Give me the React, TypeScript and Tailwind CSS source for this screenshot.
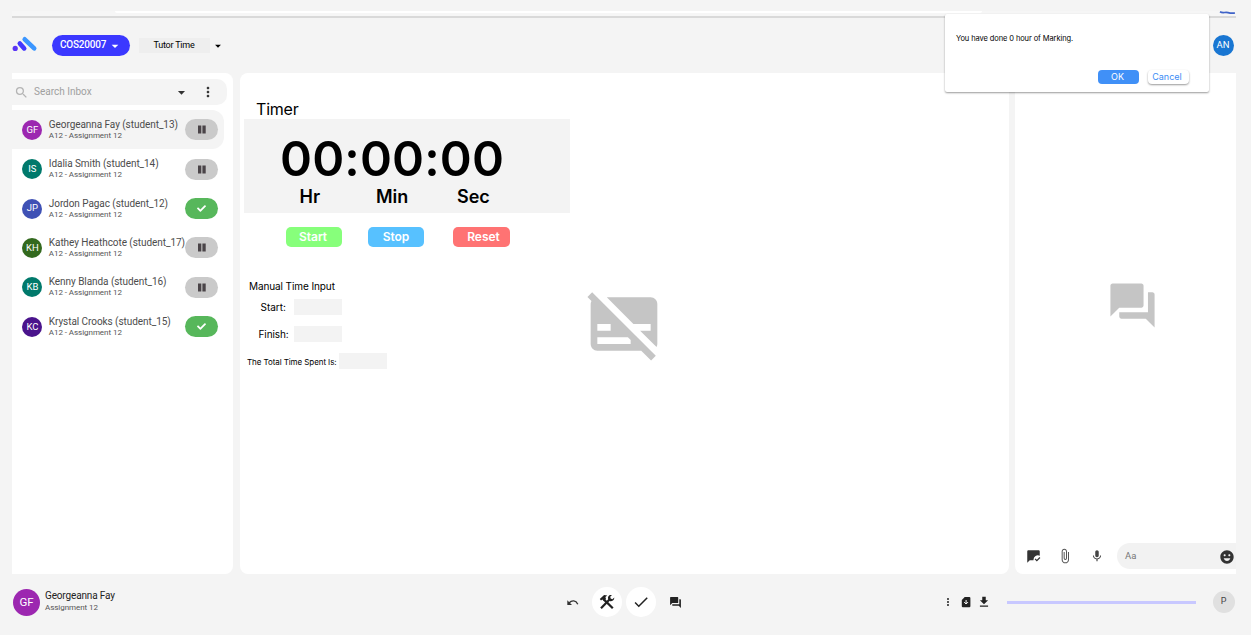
import React from "react";
import {
  MdSubtitlesOff,
  MdForum,
  MdArrowDropDown,
  MdMoreVert,
  MdSearch,
  MdCheck,
  MdMic,
  MdAttachFile,
  MdEmojiEmotions,
  MdDownload,
  MdMarkChatRead,
} from "react-icons/md";
import { FaCheck } from "react-icons/fa";

type Student = { initials: string; name: string; color: string; done: boolean };

const students: Student[] = [
  { initials: "GF", name: "Georgeanna Fay (student_13)", color: "bg-[#9c27b0]", done: false },
  { initials: "IS", name: "Idalia Smith (student_14)", color: "bg-[#00796b]", done: false },
  { initials: "JP", name: "Jordon Pagac (student_12)", color: "bg-[#3f51b5]", done: true },
  { initials: "KH", name: "Kathey Heathcote (student_17)", color: "bg-[#33691e]", done: false },
  { initials: "KB", name: "Kenny Blanda (student_16)", color: "bg-[#00796b]", done: false },
  { initials: "KC", name: "Krystal Crooks (student_15)", color: "bg-[#4a148c]", done: true },
];

function Logo() {
  return (
    <svg width="26" height="16" viewBox="0 0 26 16" fill="none" strokeLinecap="round" strokeWidth="4.6">
      <circle cx="3.2" cy="12.4" r="2.6" fill="#5a35f5" />
      <path d="M7.8 7.4L12.2 12.4" stroke="#4338ff" />
      <path d="M12.7 3.3L22.2 12.4" stroke="#3b96ff" />
    </svg>
  );
}

function PauseIcon() {
  return (
    <svg width="10" height="9" viewBox="0 0 10 9" fill="#4a4448">
      <rect x="1" y="0.5" width="3.3" height="8" />
      <rect x="5.4" y="0.5" width="3.3" height="8" />
    </svg>
  );
}

function StudentRow({ student, selected }: { student: Student; selected: boolean }) {
  return (
    <div className={`flex h-[39.4px] w-[212px] items-center rounded-r-[12px] pl-[10.4px] ${selected ? "bg-[#f4f4f4]" : ""}`}>
      <div className={`flex size-5 shrink-0 items-center justify-center rounded-full text-[9.5px] text-white ${student.color}`}>
        {student.initials}
      </div>
      <div className="ml-[6.4px] w-[136.6px] shrink-0 whitespace-nowrap">
        <div className="text-[10px] leading-[12px] tracking-[-0.06px] text-[#4c4c4c]">{student.name}</div>
        <div className="text-[8px] leading-[10px] tracking-[-0.05px] text-[#555]">A12 - Assignment 12</div>
      </div>
      <div className={`flex h-[21px] w-[33px] shrink-0 items-center justify-center rounded-full ${student.done ? "bg-[#57b75b]" : "bg-[#cacaca]"}`}>
        {student.done ? <FaCheck size={9} color="#fff" /> : <PauseIcon />}
      </div>
    </div>
  );
}

function Inbox() {
  return (
    <section className="flex w-[221px] flex-col rounded-r-[8px] bg-white pt-[6px]">
      <div className="flex h-[26px] w-[215px] items-center rounded-r-[10px] bg-[#f4f4f4] pl-[2px]">
        <MdSearch size={15} color="#b4b4b4" />
        <span className="ml-[5px] w-[127px] pb-[1px] text-[10px] text-[#a0a0a0]">Search Inbox</span>
        <MdArrowDropDown className="ml-[12px]" size={17} color="#333" />
        <MdMoreVert className="ml-[10px]" size={16} color="#333" />
      </div>
      <div className="flex flex-col pt-[5.1px]">
        {students.map((s, i) => (
          <StudentRow key={s.initials} student={s} selected={i === 0} />
        ))}
      </div>
    </section>
  );
}

function TimerPanel() {
  return (
    <section className="ml-[7px] flex w-[769px] rounded-[8px] bg-white pl-1 text-black">
      <div className="flex w-[327px] flex-col pt-[26px] whitespace-nowrap">
        <h1 className="h-5 pl-[12px] text-[16px] leading-5 tracking-[-0.2px]">Timer</h1>
        <div className="h-[94px] w-[326px] bg-[#f3f3f3]">
          <div className="h-[66px] pt-[14px] pl-[36px] text-[48.5px] leading-[52px] font-semibold tracking-[0.15px]">00:00:00</div>
          <div className="flex text-[18px] leading-6 font-semibold">
            <span className="ml-[55.5px] w-[76.5px]">Hr</span>
            <span className="w-[81px]">Min</span>
            <span>Sec</span>
          </div>
        </div>
        <div className="flex pt-[14px] pl-[42px] text-[12px] leading-5 font-semibold text-white">
          <button className="mr-[26px] h-5 w-[56px] rounded-[5px] bg-[#87ff7b] pr-[2px]">Start</button>
          <button className="mr-[29px] h-5 w-[56px] rounded-[5px] bg-[#57c1ff]">Stop</button>
          <button className="h-5 w-[57px] rounded-[5px] bg-[#ff7373] pl-1">Reset</button>
        </div>
        <h2 className="mt-[30px] pl-[5px] text-[10px] leading-[18px] tracking-[-0.1px]">Manual Time Input</h2>
        <label className="mt-[4px] flex h-4 items-center text-[10px]">
          <span className="w-[50px] pt-[1px] pl-[16.5px]">Start:</span>
          <span className="h-4 w-[48px] bg-[#f3f3f3]" />
        </label>
        <label className="mt-[11px] flex h-4 items-center text-[10px]">
          <span className="w-[50px] pl-[14.5px] tracking-[-0.1px]">Finish:</span>
          <span className="h-4 w-[48px] bg-[#f3f3f3]" />
        </label>
        <label className="mt-[11px] flex h-4 items-center text-[8px]">
          <span className="w-[95px] pt-[1px] pl-[3px] tracking-[-0.08px]">The Total Time Spent Is:</span>
          <span className="h-4 w-[48px] bg-[#f3f3f3]" />
        </label>
      </div>
      <MdSubtitlesOff className="mt-[210.5px] ml-[12.7px]" size={80} color="#c5c5c5" />
    </section>
  );
}

function ChatPanel() {
  return (
    <section className="ml-[6px] flex w-[221px] flex-col rounded-l-[8px] bg-white">
      <div className="flex h-[470px] pt-[206px] pl-[91.2px]">
        <MdForum size={53} color="#c5c5c5" />
      </div>
      <div className="flex h-[26px] items-center pl-[11.4px]">
        <MdMarkChatRead size={15} color="#333" />
        <MdAttachFile className="ml-[16px]" size={16} color="#555" />
        <MdMic className="ml-[16.6px]" size={14} color="#444" />
        <div className="ml-[13px] flex h-[26px] flex-1 items-center justify-between rounded-l-full rounded-r-[7px] bg-[#f2f2f2] pl-2">
          <span className="text-[9.5px] text-[#777]">Aa</span>
          <MdEmojiEmotions className="mt-[1px] mr-[1.3px]" size={16} color="#333" />
        </div>
      </div>
    </section>
  );
}

function ToolsIcon() {
  return (
    <svg width="16" height="16" viewBox="0 0 16 16" fill="none" stroke="#222">
      <path d="M5 5.6L13.8 14.3" strokeWidth="2.2" />
      <path d="M2 14.2L10.5 5.5" strokeWidth="2.2" />
      <path d="M.8 5L5.1 1.1L8.2 1.5L6.4 3.1L7 5L4.7 7L3.3 5.5L2 6.5Z" fill="#222" stroke="none" />
      <path d="M10.8 1.1A3.5 3.5 0 0 0 9.4 5.6L10.7 7A3.5 3.5 0 0 0 15.3 3.4L13.4 5.2L11.7 4.5L11.2 2.8L13 .9Z" fill="#222" stroke="none" />
    </svg>
  );
}

function UndoIcon() {
  return (
    <svg width="13" height="9" viewBox="0 0 13 9" fill="none" stroke="#333">
      <path d="M2 5C4.9 1.9 8.8 2.1 10.8 6.2" strokeWidth="1.4" />
      <path d="M0.3 2.3V6.9H5Z" fill="#333" stroke="none" />
    </svg>
  );
}

function FileDownIcon() {
  return (
    <svg width="10" height="12" viewBox="0 0 10 12">
      <path d="M3.7 1H8.4Q9.4 1 9.4 2V10.2Q9.4 11.2 8.4 11.2H1.8Q.8 11.2 .8 10.2V4Z" fill="#222" />
      <path d="M5.1 4V7.8M3.2 6.1L5.1 8L7 6.1" fill="none" stroke="#fff" />
    </svg>
  );
}

function Footer() {
  return (
    <footer className="flex h-[61px] items-center pb-[4.5px] pl-[13px]">
      <div className="flex size-[27px] items-center justify-center rounded-full bg-[#9c27b0] text-[11.5px] text-white">GF</div>
      <div className="ml-[5px] w-[522px] pb-[1px] whitespace-nowrap">
        <div className="text-[10px] leading-[12px] tracking-[-0.15px] text-[#222]">Georgeanna Fay</div>
        <div className="text-[8px] leading-[12px] tracking-[-0.05px] text-[#555]">Assignment 12</div>
      </div>
      <UndoIcon />
      <div className="ml-[12px] flex size-[30px] items-center justify-center rounded-full bg-white"><ToolsIcon /></div>
      <div className="ml-[4px] flex size-[30px] items-center justify-center rounded-full bg-white"><MdCheck size={18} color="#222" /></div>
      <MdForum className="ml-[12.5px]" size={13} color="#222" />
      <MdMoreVert className="ml-[260.5px]" size={12} color="#333" />
      <span className="ml-[7px]"><FileDownIcon /></span>
      <MdDownload className="ml-[6px]" size={14} color="#222" />
      <div className="ml-[16px] h-[3px] w-[189px] bg-[#c8c8ff]" />
      <div className="ml-[16.5px] flex size-[22px] items-center justify-center rounded-full bg-[#e0e0e0] pb-[1px] text-[9px] text-[#444]">P</div>
    </footer>
  );
}

export default function App() {
  return (
    <div className="relative flex h-[635px] w-[1251px] flex-col overflow-hidden bg-[#f4f4f4] font-['Roboto',sans-serif]">
      <div className="mt-[11px] ml-[12px] flex h-[7px] w-[1224px] border-b-2 border-[#d9d9d9] bg-[#f6f6f6]">
        <div className="ml-[103px] h-[2px] w-[867px] rounded-b-full bg-white" />
        <svg className="ml-auto" width="17" height="5" viewBox="0 0 17 5" fill="none">
          <path d="M1 .8C4 2.6 6 .8 9 1.6S13 2.4 16 2" stroke="#3f63c8" strokeWidth="1.7" />
        </svg>
      </div>
      <header className="flex h-[55px] items-center pl-[12px]">
        <span className="mb-[4px]"><Logo /></span>
        <button className="ml-[14px] flex h-[21px] w-[78px] items-center rounded-full bg-[#3b38ff] pl-2 text-[10px] text-white">
          <span className="w-[46.5px] pb-[2px] text-left font-medium tracking-[-0.2px]">COS20007</span>
          <MdArrowDropDown size={16} />
        </button>
        <div className="ml-[9px] flex h-[15px] w-[71px] items-center justify-center bg-[#eee] pt-[1px] pr-[1px] text-[9px] tracking-[-0.2px] text-black">
          Tutor Time
        </div>
        <MdArrowDropDown className="mt-[1px] ml-[0.5px]" size={14} color="#000" />
        <div className="mr-[17.5px] ml-auto flex size-[21px] items-center justify-center rounded-full bg-[#1976d2] text-[9.5px] text-white">AN</div>
      </header>
      <main className="flex h-[501px] pl-[12px]">
        <Inbox />
        <div className="flex font-['Inter',sans-serif]"><TimerPanel /></div>
        <ChatPanel />
      </main>
      <Footer />
      <div
        role="dialog"
        className="absolute top-[14px] left-[945px] h-[77.5px] w-[264px] rounded-[2px] bg-white px-[11px] pt-[20px] font-['Inter',sans-serif] shadow-[0_1px_2px_rgba(0,0,0,0.4)]"
      >
        <p className="text-[7.5px] leading-[10px] tracking-[-0.1px] whitespace-nowrap text-black">You have done 0 hour of Marking.</p>
        <div className="mt-[25.5px] flex justify-end gap-[9px] pr-[9px] text-[9px] leading-[14px]">
          <button className="h-[14px] w-[41px] rounded-[4px] bg-[#4090f7] pr-[2px] text-white">OK</button>
          <button className="h-[14px] w-[41px] rounded-[4px] bg-white pr-[3px] text-[#3c8cf5] shadow-[0_1px_2px_rgba(0,0,0,0.4)]">Cancel</button>
        </div>
      </div>
    </div>
  );
}
